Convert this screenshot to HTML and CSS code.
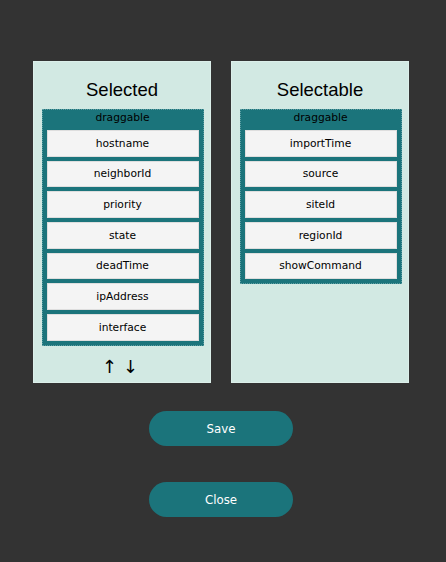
FILE: index.html
```html
<!DOCTYPE html>
<html>
<head>
<meta charset="utf-8">
<link rel="stylesheet" href="styles.css">
</head>
<body>
<div class="page">
  <div class="columns">
    <div class="panel">
      <div class="title">Selected</div>
      <div class="list">
        <div class="list-head">draggable</div>
        <div class="item">hostname</div>
        <div class="item">neighborId</div>
        <div class="item">priority</div>
        <div class="item">state</div>
        <div class="item">deadTime</div>
        <div class="item">ipAddress</div>
        <div class="item">interface</div>
      </div>
      <div class="arrows"><span>↑</span><span>↓</span></div>
    </div>
    <div class="panel">
      <div class="title">Selectable</div>
      <div class="list">
        <div class="list-head">draggable</div>
        <div class="item">importTime</div>
        <div class="item">source</div>
        <div class="item">siteId</div>
        <div class="item">regionId</div>
        <div class="item">showCommand</div>
      </div>
    </div>
  </div>
  <div class="actions">
    <button class="btn save">Save</button>
    <button class="btn close">Close</button>
  </div>
</div>
</body>
</html>
```
FILE: styles.css
```css
html, body {
  margin: 0;
  padding: 0;
  background: #333333;
  height: 100%;
}
.page {
  width: 376px;
  margin-left: 33px;
  padding-top: 61px;
  font-family: "DejaVu Sans", Verdana, sans-serif;
}
.columns {
  display: flex;
  gap: 20px;
}
.panel {
  box-sizing: border-box;
  width: 178px;
  height: 322px;
  background: #d2e9e3;
  border: 1px solid #dcefea;
  padding: 15px 7px 0 7px;
  display: flex;
  flex-direction: column;
}
.title {
  font-family: "Liberation Sans", Arial, sans-serif;
  font-size: 18.5px;
  line-height: 25px;
  text-align: center;
  color: #000;
  margin-bottom: 7px;
}
.list {
  background: #1b747b;
  border: 1px dotted #5e9ea3;
  padding: 0 4px 4px 4px;
  display: flex;
  flex-direction: column;
  gap: 4px;
  width: 152px;
  margin: 0 auto;
  position: relative;
  left: 0.5px;
}
.list-head {
  height: 16px;
  line-height: 16px;
  font-size: 10.7px;
  text-align: center;
  color: #000;
}
.item {
  box-sizing: border-box;
  height: 26.67px;
  background: #f4f4f4;
  border: 1px solid #dedede;
  display: flex;
  align-items: center;
  justify-content: center;
  font-size: 10.7px;
  color: #000;
}
.arrows {
  display: flex;
  justify-content: center;
  gap: 6px;
  margin-top: 11px;
  font-size: 18px;
  line-height: 20px;
  color: #000;
  position: relative;
  left: -2px;
}
.actions {
  display: flex;
  flex-direction: column;
  align-items: center;
  gap: 36px;
  margin-top: 28px;
}
.btn {
  width: 144px;
  height: 35px;
  border-radius: 18px;
  border: none;
  background: #1b747b;
  color: #ffffff;
  font-family: "DejaVu Sans", Verdana, sans-serif;
  font-size: 11.8px;
  padding: 0;
}
```
